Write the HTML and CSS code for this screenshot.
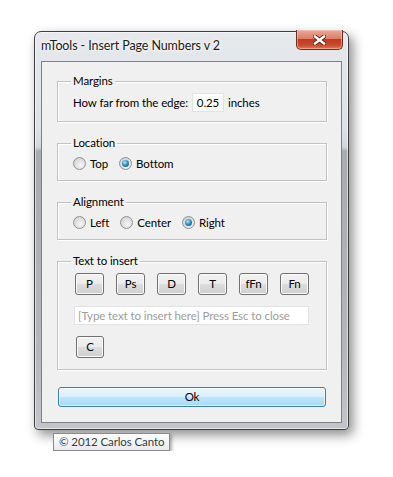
FILE: index.html
```html
<!DOCTYPE html>
<html>
<head>
  <title>mTools - Insert Page Numbers v 2</title>
  <link rel="stylesheet" href="styles.css">
</head>
<body>
  <div class="window">
    <div class="titlebar">
      <span class="title">mTools - Insert Page Numbers v 2</span>
      <div class="close">
        <svg width="13" height="10" viewBox="0 0 13 10">
          <path d="M2 1.5 L11 8.5 M11 1.5 L2 8.5" stroke="#5a2418" stroke-width="4.2" stroke-linecap="square"></path>
          <path d="M2 1.5 L11 8.5 M11 1.5 L2 8.5" stroke="#ffffff" stroke-width="2.4" stroke-linecap="square"></path>
        </svg>
      </div>
    </div>

    <div class="client">
      <fieldset class="group">
        <legend>Margins</legend>
        <div class="row margins-row">
          <span>How far from the edge:</span>
          <span class="field value">0.25</span>
          <span>inches</span>
        </div>
      </fieldset>

      <fieldset class="group">
        <legend>Location</legend>
        <div class="row radios">
          <label class="option"><span class="radio"></span>Top</label>
          <label class="option"><span class="radio checked"></span>Bottom</label>
        </div>
      </fieldset>

      <fieldset class="group">
        <legend>Alignment</legend>
        <div class="row radios">
          <label class="option"><span class="radio"></span>Left</label>
          <label class="option"><span class="radio"></span>Center</label>
          <label class="option"><span class="radio checked"></span>Right</label>
        </div>
      </fieldset>

      <fieldset class="group insert">
        <legend>Text to insert</legend>
        <div class="buttons">
          <div class="btn">P</div>
          <div class="btn">Ps</div>
          <div class="btn">D</div>
          <div class="btn">T</div>
          <div class="btn">fFn</div>
          <div class="btn">Fn</div>
        </div>
        <div class="field text-field">[Type text to insert here] Press Esc to close</div>
        <div class="btn btn-c">C</div>
      </fieldset>

      <div class="ok">Ok</div>
    </div>
  </div>

  <div class="tooltip">© 2012 Carlos Canto</div>
</body>
</html>
```

FILE: styles.css
```css
body {
  margin: 0;
  padding: 31px 0 0 34px;
  background: #ffffff;
  font-family: 'Lato', 'Noto Sans', sans-serif;
  font-size: 11.5px;
  letter-spacing: -0.1px;
  color: #000000;
}
.window {
  box-sizing: border-box;
  width: 315px;
  height: 399px;
  padding: 0 6px 6px;
  border: 1px solid #3c3f43;
  border-radius: 7px 7px 4px 4px;
  background: linear-gradient(to bottom, #e6e9ec 0%, #dde1e5 25%, #d3d6d9 29%, #a9abae 30%, #b4b6b9 80%, #c3c5c8 100%);
  box-shadow: inset 0 0 0 1px rgba(255, 255, 255, 0.55), 4px 5px 12px rgba(0, 0, 0, 0.45);
}
.titlebar {
  display: flex;
  justify-content: space-between;
  height: 29px;
  margin: 0 -1px;
  padding-left: 1px;
}
.title {
  line-height: 28px;
  font-size: 12.5px;
  color: #1b1b1b;
  text-shadow: 0 0 6px #ffffff, 0 0 3px #ffffff;
}
.close {
  display: flex;
  align-items: center;
  justify-content: center;
  width: 47px;
  height: 20px;
  margin-top: -2px;
  box-sizing: border-box;
  border: 1px solid #6b2d22;
  border-top: none;
  border-radius: 0 0 5px 5px;
  background: linear-gradient(to bottom, #e9a896 0%, #dc7f68 45%, #c13a20 50%, #c94a2e 80%, #e07a56 100%);
  box-shadow: inset 0 0 0 1px rgba(255, 210, 190, 0.5);
}
.close svg {
  display: block;
}

/* client area */
.client {
  height: 362px;
  box-sizing: border-box;
  padding-top: 11px;
  border: 1px solid #7d8187;
  background: #f0f0f0;
}
.group {
  margin: 0 14px 13px 15px;
  padding: 3px 15px 9px 15px;
  min-width: 0;
  border: 1px solid #bfc1c4;
  box-shadow: 1px 1px 0 #ffffff, inset 1px 1px 0 #ffffff;
}
.group legend {
  padding: 0 2px;
  margin-left: -2px;
  line-height: 16px;
}
.row {
  display: flex;
  align-items: center;
}
.margins-row {
  height: 20px;
  gap: 4px;
}
.field {
  box-sizing: border-box;
  background: #ffffff;
  border: 1px solid #e0e3e6;
}
.value {
  width: 32px;
  height: 19px;
  line-height: 17px;
  text-align: center;
}
.radios {
  height: 16px;
  gap: 11px;
  padding-top: 1px;
}
.option {
  display: flex;
  align-items: center;
  gap: 4px;
}
.radio {
  box-sizing: border-box;
  display: flex;
  align-items: center;
  justify-content: center;
  width: 13px;
  height: 13px;
  border-radius: 50%;
  border: 1px solid #8f9193;
  background: radial-gradient(circle at 60% 65%, #f6f6f6 0%, #e2e2e2 45%, #c9c9c9 100%);
}
.radio.checked:after {
  content: '';
  width: 7px;
  height: 7px;
  border-radius: 50%;
  background: radial-gradient(circle at 40% 35%, #b8ecff 0%, #2b94c6 45%, #0c4b72 100%);
}

/* text to insert */
.insert {
  margin-bottom: 17px;
  padding-top: 4px;
  padding-bottom: 11px;
}
.buttons {
  display: flex;
  gap: 12px;
  margin-left: 2px;
}
.btn {
  box-sizing: border-box;
  width: 29px;
  height: 22px;
  line-height: 20px;
  text-align: center;
  border: 1px solid #707070;
  border-radius: 3px;
  background: linear-gradient(to bottom, #f2f2f2 0%, #ebebeb 50%, #dddddd 51%, #cfcfcf 100%);
  box-shadow: inset 0 0 0 1px #fbfbfb;
}
.text-field {
  width: 235px;
  height: 19px;
  margin: 11px 0 11px 1px;
  padding-left: 3px;
  line-height: 17px;
  color: #9c9c9c;
  white-space: nowrap;
  overflow: hidden;
}
.btn-c {
  width: 28px;
  margin-left: 3px;
}
.ok {
  box-sizing: border-box;
  width: 268px;
  height: 20px;
  margin-left: 16px;
  line-height: 18px;
  text-align: center;
  border: 1px solid #3c7fb1;
  border-radius: 3px;
  background: linear-gradient(to bottom, #eaf6fd 0%, #d9f0fc 50%, #bee6fd 51%, #a7d9f5 100%);
  box-shadow: inset 0 0 0 1px rgba(255, 255, 255, 0.6);
}

/* copyright tooltip */
.tooltip {
  display: inline-block;
  box-sizing: border-box;
  height: 18px;
  margin: 3px 0 0 19px;
  padding: 0 5px 0 5px;
  line-height: 16px;
  white-space: nowrap;
  color: #3b3b3b;
  border: 1px solid #8a8a8a;
  background: linear-gradient(to bottom, #ffffff 0%, #e9eaf1 100%);
  box-shadow: 2px 2px 3px rgba(0, 0, 0, 0.3);
}
```
